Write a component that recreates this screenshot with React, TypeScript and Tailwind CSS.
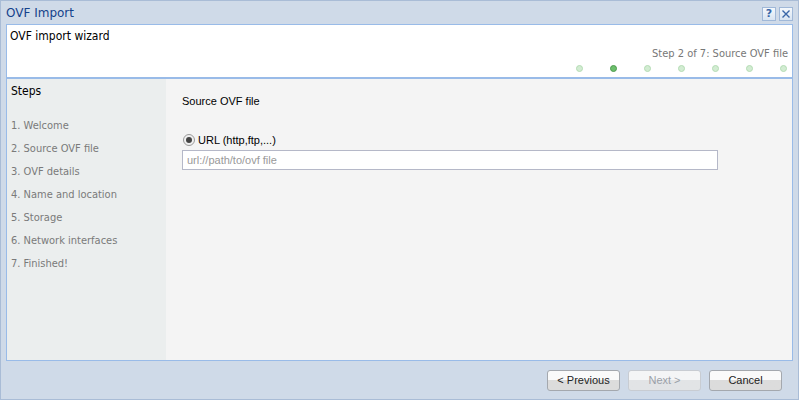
const steps = [
  "1. Welcome",
  "2. Source OVF file",
  "3. OVF details",
  "4. Name and location",
  "5. Storage",
  "6. Network interfaces",
  "7. Finished!",
];

function Dot({ active }: { active?: boolean }) {
  return (
    <span
      className={
        active
          ? "block h-[7px] w-[7px] rounded-full border border-[#4e9a4e] bg-[#6cbf6c]"
          : "block h-[7px] w-[7px] rounded-full border border-[#b4dcb4] bg-[#d2ecd2]"
      }
    />
  );
}

function WizButton({ label, disabled }: { label: string; disabled?: boolean }) {
  return (
    <button
      className={
        disabled
          ? "h-[21px] w-[73px] rounded-[3px] border border-[#c8ccd2] bg-gradient-to-b from-[#f4f5f6] from-50% to-[#e2e4e6] to-50% text-[11px] text-[#9aa0a8]"
          : "h-[21px] w-[73px] rounded-[3px] border border-[#a4a8ae] bg-gradient-to-b from-[#fafafa] from-50% to-[#dcdcdc] to-50% text-[11px] text-[#222]"
      }
    >
      {label}
    </button>
  );
}

export default function App() {
  return (
    <div className="flex h-[400px] w-[799px] flex-col border border-[#a9bcd6] bg-[#cfdae8] font-['DejaVu_Sans',sans-serif]">
      <div className="flex h-[23px] items-center justify-between pl-[5px] pr-[5px]">
        <span className="text-[12px] text-[#15428b]">OVF Import</span>
        <div className="flex gap-[3px] pt-[2px]">
          <span className="flex h-[14px] w-[14px] items-center justify-center border border-[#a0b8d8] bg-gradient-to-b from-[#f4f8fc] to-[#d8e4f2] text-[11px] font-bold leading-none text-[#3a66a8]">
            ?
          </span>
          <span className="flex h-[14px] w-[14px] items-center justify-center border border-[#a0b8d8] bg-gradient-to-b from-[#f4f8fc] to-[#d8e4f2]">
            <svg width="10" height="10" viewBox="0 0 10 10">
              <path d="M1.5 1.5 L8.5 8.5 M8.5 1.5 L1.5 8.5" stroke="#3a66a8" strokeWidth="1.4" />
            </svg>
          </span>
        </div>
      </div>

      <div className="mx-[5px] flex h-[337px] flex-col border border-[#99bbe8] font-['DejaVu_Sans_Condensed','DejaVu_Sans',sans-serif] [font-stretch:condensed]">
        <div className="flex h-[54px] flex-col border-b-2 border-[#99bbe8] bg-white">
          <div className="pl-[3px] pt-[4px] text-[12px] leading-[14px] text-black">OVF import wizard</div>
          <div className="pr-[4px] pt-[4px] text-right text-[11px] leading-[14px] text-[#777]">
            Step 2 of 7: Source OVF file
          </div>
          <div className="flex justify-end gap-[27px] pr-[5px] pt-[4px]">
            <Dot />
            <Dot active />
            <Dot />
            <Dot />
            <Dot />
            <Dot />
            <Dot />
          </div>
        </div>

        <div className="flex flex-1">
          <div className="w-[159px] bg-[#ebeeee] pl-[4px] pt-[5px]">
            <div className="text-[12px] leading-[14px] text-black">Steps</div>
            <div className="flex flex-col gap-[9px] pt-[21px]">
              {steps.map((s) => (
                <div key={s} className="text-[11px] leading-[14px] text-[#7a7a7a]">
                  {s}
                </div>
              ))}
            </div>
          </div>
          <div className="flex-1 bg-[#f4f4f4] pl-[16px] pt-[15px] font-['Liberation_Sans',sans-serif] [font-stretch:normal]">
            <div className="text-[11px] leading-[14px] text-black">Source OVF file</div>
            <label className="mt-[25px] flex h-[14px] items-center gap-[3px] pl-[1px] text-[11px] text-black">
              <span className="flex h-[12px] w-[12px] items-center justify-center rounded-full border border-[#9a9a9a] bg-[#f0f0f0]">
                <span className="h-[6px] w-[6px] rounded-full bg-[#444]" />
              </span>
              URL (http,ftp,...)
            </label>
            <div className="mt-[3px] flex h-[20px] w-[536px] items-center border border-[#b5b8c8] bg-white px-[4px] text-[11px] text-[#999]">
              url://path/to/ovf file
            </div>
          </div>
        </div>
      </div>

      <div className="flex flex-1 items-center justify-end gap-[8px] pr-[16px] font-['Liberation_Sans',sans-serif]">
        <WizButton label="< Previous" />
        <WizButton label="Next >" disabled />
        <WizButton label="Cancel" />
      </div>
    </div>
  );
}
